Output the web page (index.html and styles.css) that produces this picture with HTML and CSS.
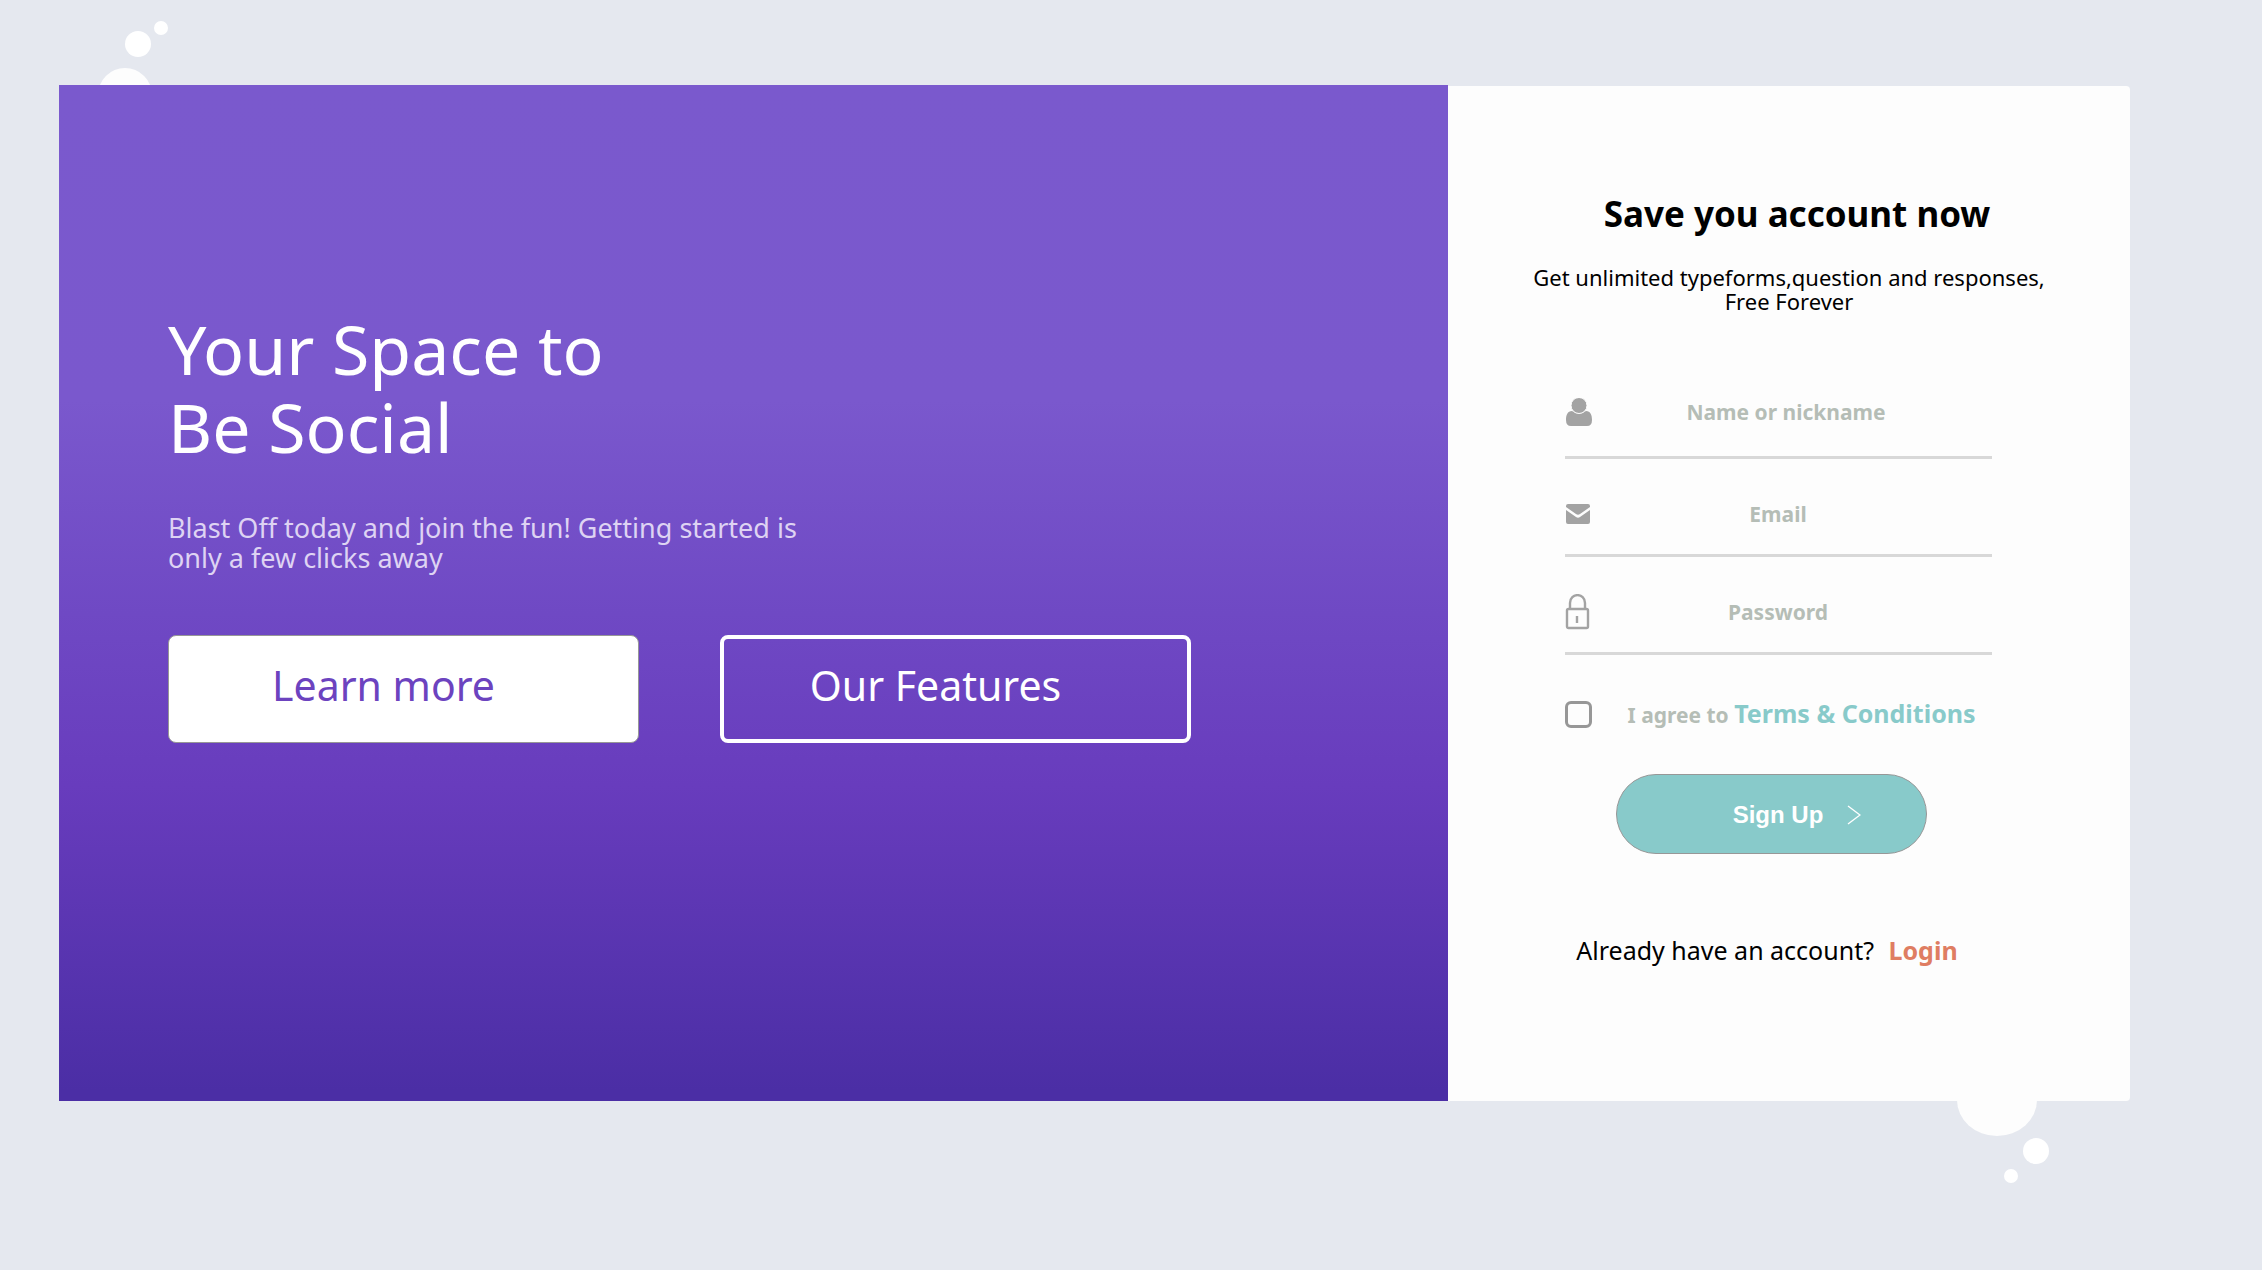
FILE: index.html
```html
<!DOCTYPE html>
<html lang="en">
<head>
<meta charset="utf-8">
<meta name="viewport" content="width=device-width, initial-scale=1">
<title>Your Space to Be Social</title>
<link rel="stylesheet" href="styles.css">
</head>
<body>
<main class="card">
  <svg class="bubbles bubbles-top" width="78" height="80" viewBox="0 0 78 80" aria-hidden="true">
    <circle cx="26" cy="75" r="27" fill="#fdfdfd"/>
    <circle cx="39" cy="24" r="13" fill="#fff"/>
    <circle cx="62" cy="8" r="7" fill="#fff"/>
  </svg>
  <section class="hero">
    <h1 class="hero-title">Your Space to<br>Be Social</h1>
    <p class="hero-text">Blast Off today and join the fun! Getting started is<br>only a few clicks away</p>
    <div class="hero-actions">
      <button type="button" class="btn btn-solid">Learn more</button>
      <button type="button" class="btn btn-outline">Our Features</button>
    </div>
  </section>
  <section class="signup">
    <h2 class="signup-title">Save you account now</h2>
    <p class="signup-text">Get unlimited typeforms,question and responses,<br>Free Forever</p>
    <form class="form">
      <div class="field field-name">
        <label for="name" aria-label="Name or nickname">
          <svg class="icon" width="28" height="28" viewBox="0 0 28 28" aria-hidden="true"><path d="M7 13C2.500 13 1 17 1 22Q1 28 6 28H22Q27 28 27 22C27 17 25.500 13 21 13Q14 18 7 13Z" fill="#a3a3a3"/><circle cx="14" cy="7.500" r="8" fill="#a3a3a3" stroke="#fdfdfd"/></svg>
        </label>
        <input class="input" id="name" type="text" placeholder="Name or nickname">
      </div>
      <div class="field">
        <label for="email" aria-label="Email">
          <svg class="icon" width="28" height="20" viewBox="0 0 28 20" aria-hidden="true"><path d="M3 0H23Q25 0 25 2V3L15 10Q13 11.500 11 10L1 3V2Q1 0 3 0Z" fill="#a3a3a3"/><path d="M1 6L11 13Q13 14.500 15 13L25 6V18Q25 20 23 20H3Q1 20 1 18Z" fill="#a3a3a3"/></svg>
        </label>
        <input class="input" id="email" type="email" placeholder="Email">
      </div>
      <div class="field">
        <label for="password" aria-label="Password">
          <svg class="icon" width="28" height="36" viewBox="0 0 28 36" fill="none" stroke="#a3a3a3" stroke-width="2.400" aria-hidden="true"><rect x="2" y="15" width="21" height="19" rx="1.500"/><path d="M5 15V9C5 -1.500 20 -1.500 20 9V15M12 22V29"/></svg>
        </label>
        <input class="input" id="password" type="password" placeholder="Password">
      </div>
      <div class="agree">
        <input class="checkbox" id="agree" type="checkbox">
        <label for="agree">I agree to <a class="terms" href="#terms">Terms &amp; Conditions</a></label>
      </div>
      <button type="submit" class="submit">
        <span>Sign Up</span>
        <svg width="14" height="20" viewBox="0 0 14 20" fill="none" stroke="#fff" stroke-width="1.400" aria-hidden="true"><path d="M1 1L13 10L1 19"/></svg>
      </button>
    </form>
    <p class="login">Already have an account? <a class="login-link" href="#login">Login</a></p>
  </section>
  <svg class="bubbles bubbles-bottom" width="92" height="120" viewBox="0 0 92 120" aria-hidden="true">
    <ellipse cx="40" cy="37" rx="40" ry="36" fill="#fdfdfd"/>
    <circle cx="79" cy="88" r="13" fill="#fff"/>
    <circle cx="54" cy="113" r="7" fill="#fff"/>
  </svg>
</main>
</body>
</html>
```
FILE: styles.css
```css
* {
  box-sizing: border-box;
}

body {
  margin: 0;
  padding: 85px 132px 168px 59px;
  background: #e5e8ef;
  font-family: "Noto Sans", "Open Sans", sans-serif;
}

h1, h2, p {
  margin: 0;
}

a {
  text-decoration: none;
}

.card {
  position: relative;
  z-index: 0;
  display: grid;
  grid-template-columns: 1389fr 682fr;
}

.bubbles {
  position: absolute;
  z-index: -1;
}

.bubbles-top {
  top: -65px;
  left: 40px;
}

.bubbles-bottom {
  right: 81px;
  bottom: -82px;
}

.hero {
  padding: 225px 109px;
  background: linear-gradient(180deg, #7a59cd 0%, #7a58cd 31%, #6f49c4 52%, #683cbd 69%, #4b2ea5 99%);
  color: #fff;
}

.hero-title {
  font-size: 68px;
  font-weight: 400;
  line-height: 78px;
}

.hero-text {
  margin-top: 47px;
  color: #ded3f3;
  font-size: 27px;
  line-height: 30px;
}

.hero-actions {
  display: flex;
  gap: 81px;
  margin-top: 62px;
}

.btn {
  width: 471px;
  height: 108px;
  padding: 0 40px 8px 0;
  border-radius: 8px;
  font: 400 41px "Noto Sans", "Open Sans", sans-serif;
}

.btn-solid {
  border: 1px solid #979797;
  background: #fff;
  color: #6c43bf;
}

.btn-outline {
  border: 4px solid #fff;
  background: transparent;
  color: #fff;
}

.signup {
  margin-top: 1px;
  padding: 106px 40px 134px;
  border-radius: 0 4px 4px 0;
  background: #fdfdfd;
  color: #000;
}

.signup-title {
  padding-left: 16px;
  font-size: 35px;
  font-weight: 700;
  line-height: 44px;
  text-align: center;
}

.signup-text {
  margin-top: 29px;
  font-size: 22px;
  line-height: 24px;
  text-align: center;
}

.form {
  width: 449px;
  margin: 48px auto 0;
  padding-right: 22px;
}

.field {
  display: flex;
  align-items: center;
  height: 98px;
  padding-top: 14px;
  border-bottom: 3px solid #d8d8d8;
}

.field-name {
  padding-top: 6px;
}

.icon {
  display: block;
}

.input {
  flex: 1;
  min-width: 0;
  padding: 0 28px 0 0;
  border: 0;
  outline: 0;
  background: transparent;
  color: #555;
  font: 700 21px/28px "Noto Sans", "Open Sans", sans-serif;
  text-align: center;
}

.field-name .input {
  padding-right: 12px;
}

.input::placeholder {
  color: #b5bdb6;
  opacity: 1;
}

.agree {
  display: flex;
  align-items: center;
  gap: 36px;
  margin-top: 41px;
  color: #b5bdb6;
  font-size: 21px;
  font-weight: 700;
  line-height: 34px;
  white-space: nowrap;
}

.checkbox {
  width: 27px;
  height: 27px;
  margin: 0;
  border: 3px solid #979797;
  border-radius: 6px;
  background: #fdfdfd;
  appearance: none;
}

.checkbox:checked {
  background: #88caca;
}

.terms {
  color: #88caca;
  font-size: 25px;
}

.submit {
  display: flex;
  align-items: center;
  justify-content: center;
  gap: 24px;
  width: 311px;
  height: 80px;
  margin: 42px 0 0 51px;
  padding: 2px 0 0 52px;
  border: 1px solid #979797;
  border-radius: 40px;
  background: #88caca;
  color: #fff;
  font: 700 24px "Liberation Sans", Arial, sans-serif;
}

.login {
  margin-top: 79px;
  padding-right: 44px;
  font-size: 25px;
  line-height: 34px;
  text-align: center;
}

.login-link {
  margin-left: 8px;
  color: #df7d62;
  font-weight: 700;
}
```
